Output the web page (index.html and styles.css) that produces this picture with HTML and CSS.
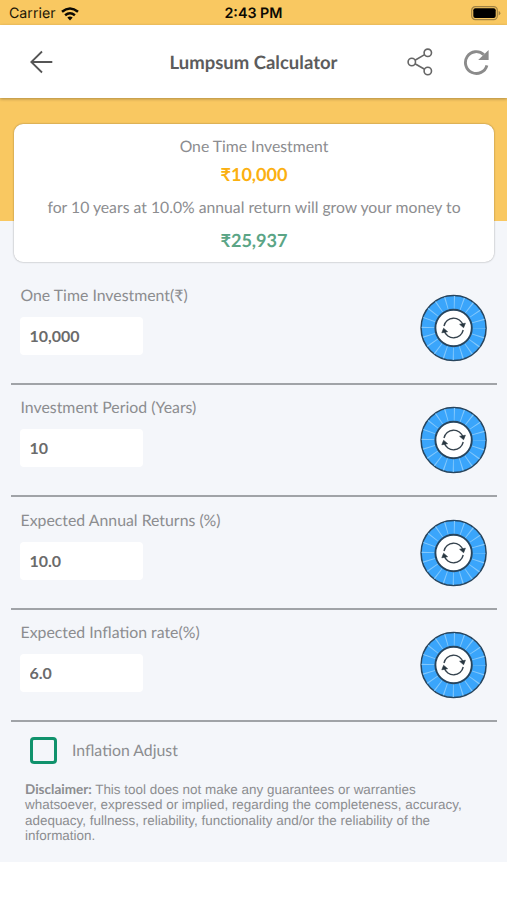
FILE: index.html
```html
<!DOCTYPE html>
<html lang="en">
<head>
    <meta charset="UTF-8">
    <meta name="viewport" content="width=device-width, initial-scale=1.0">
    <title>Lumpsum Calculator</title>
    <link rel="stylesheet" href="styles.css">
</head>
<body>

    <!-- Shared dial graphic -->
    <svg class="defs" width="0" height="0">
        <symbol id="dial" viewBox="0 0 68 68">
            <circle cx="33.6" cy="34" r="32.5" fill="#3aa5fb" stroke="#27455e" stroke-width="1.5"/>
            <circle cx="33.6" cy="34" r="25.5" fill="none" stroke="#83c8fc" stroke-width="13" stroke-dasharray="1 7.011" stroke-dashoffset="0.5"/>
            <circle cx="33.6" cy="34" r="18.2" fill="#fff" stroke="#27455e" stroke-width="1.9"/>
            <g fill="none" stroke="#35424d" stroke-width="1.4">
                <path d="M24 32A9.8 9.8 0 0 1 43 31.2"/>
                <path d="M43.2 36A9.8 9.8 0 0 1 24.2 36.8"/>
            </g>
            <path d="M39.6 30.3L45.4 29.2L43.6 33.7Z" fill="#27353f" stroke="#27353f" stroke-width="0.6"/>
            <path d="M27.6 37.7L21.8 38.8L23.6 34.3Z" fill="#27353f" stroke="#27353f" stroke-width="0.6"/>
        </symbol>
    </svg>

    <div class="status-bar">
        <div class="carrier">
            <span>Carrier</span>
            <svg width="18" height="14" viewBox="0 0 18 14" fill="none" stroke="#0c0903" stroke-width="2.5">
                <path d="M1 4.8Q9 -1.9 17 4.8"/>
                <path d="M4.1 8.3Q9 4.3 13.9 8.3"/>
                <path d="M9 13.4L6.3 10.6Q9 8.5 11.7 10.6Z" fill="#0c0903" stroke="none"/>
            </svg>
        </div>
        <div class="time">2:43 PM</div>
        <div class="battery">
            <svg width="30" height="15" viewBox="0 0 30 15">
                <rect x="0.7" y="0.7" width="25.6" height="12.9" rx="3.6" fill="none" stroke="#a08243" stroke-width="1.2"/>
                <rect x="2.3" y="2.3" width="22.4" height="9.7" rx="2" fill="#000"/>
                <path d="M27.6 5Q29.4 5.6 29.4 7.2T27.6 9.4Z" fill="#a08243"/>
            </svg>
        </div>
    </div>

    <header class="header">
        <button class="icon-button back" aria-label="Back">
            <svg width="24" height="24" viewBox="0 0 24 24" fill="none" stroke="#555" stroke-width="1.8">
                <path d="M23.3 12H2M13 1.5L2.3 12L13 22.5"/>
            </svg>
        </button>
        <h1>Lumpsum Calculator</h1>
        <div class="actions">
            <button class="icon-button" aria-label="Share">
                <svg width="28" height="30" viewBox="0 0 28 30" fill="none" stroke="#666" stroke-width="1.6">
                    <circle cx="5.8" cy="15" r="3.7"/>
                    <circle cx="21.8" cy="5.8" r="3.7"/>
                    <circle cx="21.8" cy="24" r="3.7"/>
                    <path d="M9 13.2L18.6 7.6M9 16.8L18.6 22.2"/>
                </svg>
            </button>
            <button class="icon-button" aria-label="Reset">
                <svg width="28" height="28" viewBox="0 0 28 28">
                    <path d="M21.8 6.6A10.9 10.9 0 1 0 24.9 17.3" fill="none" stroke="#8b8b8b" stroke-width="2.9"/>
                    <path d="M26.6 2V12H16.2Z" fill="#8b8b8b"/>
                </svg>
            </button>
        </div>
    </header>

    <main class="content">
        <section class="summary">
            <div class="card">
                <p>One Time Investment</p>
                <p class="amount invested">₹10,000</p>
                <p>for 10 years at 10.0% annual return will grow your money to</p>
                <p class="amount maturity">₹25,937</p>
            </div>
        </section>

        <form class="form">
            <div class="field">
                <div>
                    <label for="investment">One Time Investment(₹)</label>
                    <input type="text" id="investment" value="10,000">
                </div>
                <svg class="dial"><use href="#dial"/></svg>
            </div>
            <div class="field">
                <div>
                    <label for="period">Investment Period (Years)</label>
                    <input type="text" id="period" value="10">
                </div>
                <svg class="dial"><use href="#dial"/></svg>
            </div>
            <div class="field">
                <div>
                    <label for="returns">Expected Annual Returns (%)</label>
                    <input type="text" id="returns" value="10.0">
                </div>
                <svg class="dial"><use href="#dial"/></svg>
            </div>
            <div class="field">
                <div>
                    <label for="inflation">Expected Inflation rate(%)</label>
                    <input type="text" id="inflation" value="6.0">
                </div>
                <svg class="dial"><use href="#dial"/></svg>
            </div>
            <div class="adjust">
                <input type="checkbox" id="adjust">
                <label for="adjust">Inflation Adjust</label>
            </div>
        </form>

        <p class="disclaimer"><strong>Disclaimer:</strong> This tool does not make any guarantees or warranties<br>whatsoever, expressed or implied, regarding the completeness, accuracy,<br>adequacy, fullness, reliability, functionality and/or the reliability of the<br>information.</p>
    </main>

</body>
</html>
```
FILE: styles.css
```css
* {
    box-sizing: border-box;
}

body {
    margin: 0;
    background-color: #fff;
    font-family: Lato, sans-serif;
    font-size: 15.85px;
    color: #8c8d90;
    text-rendering: geometricPrecision;
}

h1, p {
    margin: 0;
}

.defs {
    display: block;
}

.status-bar {
    display: grid;
    grid-template-columns: 1fr auto 1fr;
    align-items: center;
    height: 25px;
    padding: 2px 6px 0;
    background-color: #f9c861;
    font-family: Inter, sans-serif;
    font-size: 14.2px;
    color: #1d1607;
}

.carrier {
    display: flex;
    align-items: center;
    gap: 5px;
    padding-left: 3px;
}

.time {
    font-size: 14.3px;
    font-weight: 600;
    color: #0c0903;
}

.battery {
    display: flex;
    justify-content: flex-end;
}

.header {
    position: relative;
    display: grid;
    grid-template-columns: 1fr auto 1fr;
    align-items: center;
    height: 73px;
    padding: 0 17px;
    background-color: #fff;
    box-shadow: 0 1px 3px rgba(0, 0, 0, 0.3);
}

.header h1 {
    font-size: 18.5px;
    font-weight: 700;
    color: #5c5c5c;
}

.icon-button {
    display: flex;
    padding: 0;
    border: none;
    background: none;
}

.back {
    margin-left: 12px;
}

.actions {
    display: flex;
    justify-content: flex-end;
    align-items: center;
    gap: 28px;
}

.content {
    height: 764px;
    background-color: #f4f6fa;
}

.summary {
    height: 174.5px;
    padding: 26px 13px 0 14px;
    background: linear-gradient(#f9c861 123px, transparent 123px);
}

.card {
    height: 138px;
    padding-top: 9px;
    border-radius: 9px;
    background-color: #fff;
    box-shadow: 0 0 2px rgba(0, 0, 0, 0.4);
    text-align: center;
    font-size: 15.75px;
    line-height: 27px;
}

.card .amount {
    font-size: 18.1px;
    font-weight: 700;
    line-height: 29px;
}

.card .amount + p {
    line-height: 37px;
}

.invested {
    color: #fbb011;
}

.maturity {
    color: #5ba586;
}

.form {
    padding: 0 10px 0 11px;
}

.field {
    display: flex;
    justify-content: space-between;
    height: 112.4px;
    padding: 12.4px 9px 0 8.5px;
    border-bottom: 2px solid #a0a3a7;
}

.field label {
    display: block;
    padding-left: 1px;
    line-height: 21px;
}

.field input {
    display: block;
    width: 123px;
    height: 38px;
    margin-top: 11px;
    padding: 0 10px 1px;
    border: none;
    border-radius: 4px;
    background-color: #fff;
    font-family: Lato, sans-serif;
    font-size: 16px;
    font-weight: 700;
    color: #6b6b6b;
}

.dial {
    width: 68px;
    height: 68px;
    margin-top: 9px;
}

.adjust {
    display: flex;
    align-items: center;
    gap: 15px;
    height: 56px;
    padding-left: 19px;
}

.adjust input {
    appearance: none;
    width: 27px;
    height: 27px;
    margin: 0;
    border: 3px solid #10926c;
    border-radius: 4px;
}

.disclaimer {
    padding: 4px 25px 0;
    font-family: "Liberation Sans", Arial, sans-serif;
    font-size: 13.45px;
    line-height: 15.4px;
    white-space: nowrap;
}

.disclaimer strong {
    font-family: Lato, sans-serif;
    font-size: 13.5px;
}
```
